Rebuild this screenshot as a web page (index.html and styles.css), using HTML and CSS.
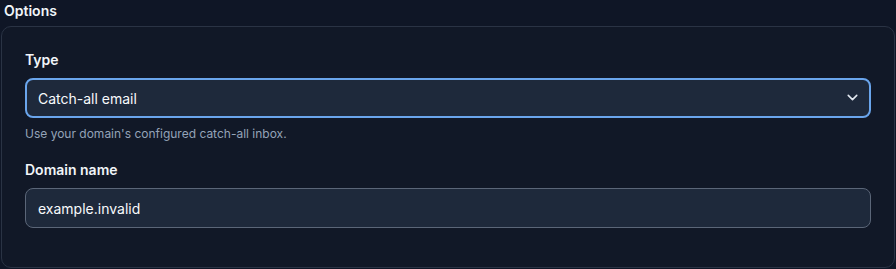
FILE: index.html
```html
<!DOCTYPE html>
<html lang="en">
<head>
  <meta charset="UTF-8">
  <title>Options</title>
  <link rel="stylesheet" href="styles.css">
</head>
<body>
  <h3 class="section-title">Options</h3>
  <div class="card">
    <div class="field">
      <label class="field-label" for="type">Type</label>
      <div class="select-wrap">
        <select id="type" class="select">
          <option>Catch-all email</option>
        </select>
        <svg class="chevron" width="17" height="17" viewBox="0 0 24 24" fill="none" stroke="currentColor" stroke-width="2.2" stroke-linecap="round" stroke-linejoin="round"><path d="M6 9l6 6 6-6"/></svg>
      </div>
      <p class="help">Use your domain's configured catch-all inbox.</p>
    </div>
    <div class="field">
      <label class="field-label" for="domain">Domain name</label>
      <input type="text" id="domain" class="input" value="example.invalid">
    </div>
  </div>
</body>
</html>
```
FILE: styles.css
```css
body {
  margin: 0;
  background: #0f1626;
  font-family: Inter, "Noto Sans", sans-serif;
  color: #f1f5f9;
}
.section-title {
  margin: 0;
  padding: 1px 0 0 4px;
  font-size: 14px;
  line-height: 20px;
  font-weight: 600;
  color: #f1f5f9;
}
.card {
  margin: 5px 1px 0 1px;
  border: 1px solid #2a3344;
  border-radius: 10px;
  background: #111827;
  padding: 23px 23px 39px 23px;
  height: 242px;
  box-sizing: border-box;
}
.field + .field {
  margin-top: 18px;
}
.field-label {
  display: block;
  font-size: 14px;
  line-height: 20px;
  font-weight: 600;
  margin-bottom: 8px;
  color: #f1f5f9;
}
.select-wrap {
  position: relative;
}
.select {
  appearance: none;
  width: 100%;
  height: 40px;
  box-sizing: border-box;
  border: 2px solid #6aa5ec;
  border-radius: 8px;
  background: #1e293b;
  color: #f8fafc;
  font-family: inherit;
  font-size: 14px;
  padding: 0 11px;
  outline: none;
}
.chevron {
  position: absolute;
  right: 10px;
  top: 11px;
  color: #e2e8f0;
  pointer-events: none;
}
.help {
  margin: 8px 0 0;
  font-size: 12px;
  line-height: 16px;
  color: #94a3b8;
}
.input {
  width: 100%;
  height: 40px;
  box-sizing: border-box;
  border: 1px solid #5b6678;
  border-radius: 8px;
  background: #1e293b;
  color: #f8fafc;
  font-family: inherit;
  font-size: 14px;
  padding: 0 12px;
  outline: none;
}
```
